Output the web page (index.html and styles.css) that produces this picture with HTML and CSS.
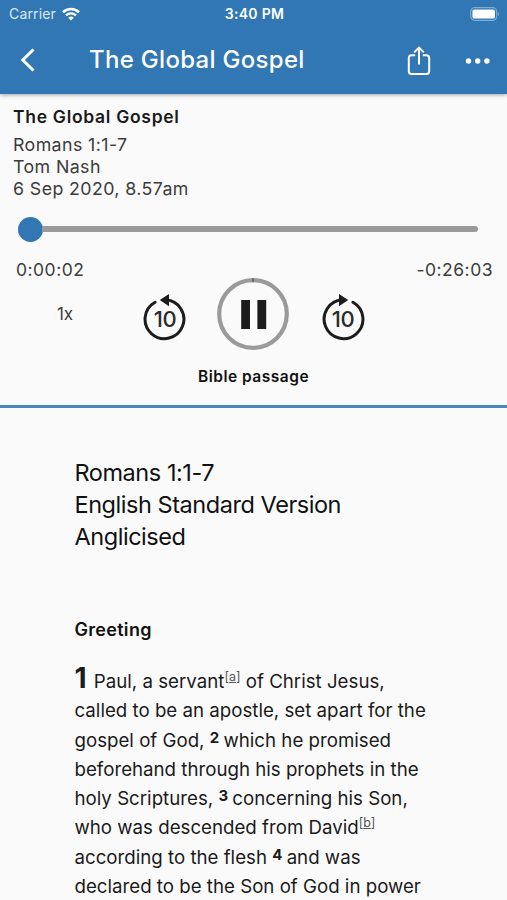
FILE: index.html
```html
<!DOCTYPE html>
<html lang="en">
<head>
  <meta charset="UTF-8">
  <meta name="viewport" content="width=device-width, initial-scale=1.0">
  <title>The Global Gospel</title>
  <link rel="stylesheet" href="styles.css">
</head>
<body>
  <div class="app">
    <header class="top">
      <div class="status-bar">
        <div class="status-left">
          <span class="carrier">Carrier</span>
          <svg class="wifi" viewBox="0 0 18 14" width="18" height="14">
            <path d="M1 5.2a11.6 11.6 0 0 1 16 0" fill="none" stroke="#fff" stroke-width="2.6"/>
            <path d="M4 8.4a7.3 7.3 0 0 1 10 0" fill="none" stroke="#fff" stroke-width="2.3"/>
            <path d="M9 13.6L6.2 10.8a4 4 0 0 1 5.6 0z" fill="#fff"/>
          </svg>
        </div>
        <span class="clock">3:40 PM</span>
        <div class="status-right">
          <svg viewBox="0 0 30 14" width="30" height="14">
            <rect x="0.7" y="0.7" width="26" height="12.6" rx="4" fill="none" stroke="#fff" stroke-opacity="0.4" stroke-width="1.2"/>
            <rect x="2.4" y="2.4" width="22.6" height="9.2" rx="2.2" fill="#fff"/>
            <path d="M28.2 4.8q1.8 2.2 0 4.4z" fill="#fff" fill-opacity="0.5"/>
          </svg>
        </div>
      </div>
      <div class="app-bar">
        <button class="icon-btn back-btn" aria-label="Back">
          <svg viewBox="0 0 16 24" width="16" height="24">
            <path d="M13.5 1.5L2.8 12l10.7 10.5" fill="none" stroke="#fff" stroke-width="3"/>
          </svg>
        </button>
        <h1 class="app-title">The Global Gospel</h1>
        <button class="icon-btn share-btn" aria-label="Share">
          <svg viewBox="0 0 24 30" width="24" height="30">
            <path d="M8.2 9.2H4.6A2.8 2.8 0 0 0 1.8 12v13.2A2.8 2.8 0 0 0 4.6 28h14.8a2.8 2.8 0 0 0 2.8-2.8V12a2.8 2.8 0 0 0-2.8-2.8h-3.6" fill="none" stroke="#fff" stroke-width="2"/>
            <path d="M12 18.5V2M7.2 6.4L12 1.6l4.8 4.8" fill="none" stroke="#fff" stroke-width="2"/>
          </svg>
        </button>
        <button class="icon-btn more-btn" aria-label="More">
          <svg viewBox="0 0 26 6" width="26" height="6">
            <circle cx="3.5" cy="3" r="2.7" fill="#fff"/>
            <circle cx="12.7" cy="3" r="2.7" fill="#fff"/>
            <circle cx="21.9" cy="3" r="2.7" fill="#fff"/>
          </svg>
        </button>
      </div>
    </header>

    <section class="player">
      <h2 class="talk-title">The Global Gospel</h2>
      <p class="talk-passage">Romans 1:1-7</p>
      <p class="talk-speaker">Tom Nash</p>
      <p class="talk-date">6 Sep 2020, 8.57am</p>

      <div class="slider">
        <div class="thumb"></div>
        <div class="track"></div>
      </div>

      <div class="times">
        <span class="elapsed">0:00:02</span>
        <span class="remaining">-0:26:03</span>
      </div>

      <div class="controls">
        <button class="icon-btn speed-btn">1x</button>
        <button class="icon-btn skip-btn" aria-label="Back 10 seconds">
          <svg viewBox="0 0 44 48" width="44" height="48">
            <path d="M12.1 9.2A19.4 19.4 0 1 0 22 6.8" fill="none" stroke="#1c1c1c" stroke-width="3" stroke-linecap="round"/>
            <path d="M16.8 7L26 1v12.3z" fill="#1c1c1c"/>
            <text x="22" y="34" class="skip-num">10</text>
          </svg>
        </button>
        <button class="icon-btn pause-btn" aria-label="Pause">
          <svg viewBox="0 0 72 72" width="72" height="72">
            <circle cx="36" cy="36" r="33.8" fill="none" stroke="#9a9a9a" stroke-width="4.2"/>
            <path d="M36 0v4.3" stroke="#555" stroke-width="1.2"/>
            <path d="M24.2 22h8.8v29h-8.8zM40.4 22h8.8v29h-8.8z" fill="#1c1c1c"/>
          </svg>
        </button>
        <button class="icon-btn skip-btn" aria-label="Forward 10 seconds">
          <svg viewBox="0 0 44 48" width="44" height="48">
            <path d="M31.9 9.2A19.4 19.4 0 1 1 22 6.8" fill="none" stroke="#1c1c1c" stroke-width="3" stroke-linecap="round"/>
            <path d="M27.2 7L18 1v12.3z" fill="#1c1c1c"/>
            <text x="22" y="34" class="skip-num">10</text>
          </svg>
        </button>
      </div>

      <h3 class="tab-title">Bible passage</h3>
    </section>

    <main class="passage">
      <h2 class="passage-title">Romans 1:1-7<br>English Standard Version Anglicised</h2>
      <h3 class="passage-heading">Greeting</h3>
      <p class="verses"><b class="chapter">1</b> Paul, a servant<sup class="note">[<a>a</a>]</sup> of Christ Jesus, called to be an apostle, set apart for the gospel of God, <sup class="num">2</sup> which he promised beforehand through his prophets in the holy Scriptures, <sup class="num">3</sup> concerning his Son, who was descended from David<sup class="note">[<a>b</a>]</sup> according to the flesh <sup class="num">4</sup> and was declared to be the Son of God in power</p>
    </main>
  </div>
</body>
</html>
```

FILE: styles.css
```css
* { margin: 0; padding: 0; box-sizing: border-box; }

body {
  font-family: Inter, "Liberation Sans", sans-serif;
  background: #fafafa;
  color: #111;
}

.app {
  height: 900px;
  display: flex;
  flex-direction: column;
  overflow: hidden;
}

.icon-btn {
  background: none;
  border: none;
  font-family: inherit;
  display: flex;
  align-items: center;
  justify-content: center;
}

/* header */
.top {
  height: 94px;
  flex-shrink: 0;
  background: #3077b3;
  color: #fff;
  box-shadow: 0 1px 4px rgba(0,0,0,0.35);
}

.status-bar {
  height: 27px;
  display: grid;
  grid-template-columns: 1fr auto 1fr;
  align-items: center;
  padding: 0 7px 0 9px;
}

.status-left {
  display: flex;
  align-items: center;
  gap: 6px;
}

.carrier {
  font-size: 14px;
  letter-spacing: 0.15px;
  color: #dce9f4;
}

.clock {
  font-size: 14px;
  font-weight: 600;
  letter-spacing: 0.3px;
}

.status-right {
  display: flex;
  justify-content: flex-end;
}

.app-bar {
  height: 65px;
  display: flex;
  align-items: center;
  padding: 0 16px 0 20px;
}

.app-title {
  flex: 1;
  margin-left: 53px;
  font-size: 24px;
  font-weight: 500;
  letter-spacing: 0.3px;
}

.share-btn {
  margin: 2px 34px 0 0;
}

.more-btn {
  margin-top: 2px;
}

/* player */
.player {
  height: 314px;
  flex-shrink: 0;
  padding: 12px 14px 0 13px;
  border-bottom: 3px solid #4a86b9;
}

.talk-title {
  font-size: 17.5px;
  line-height: 22px;
  font-weight: 600;
  letter-spacing: 0.7px;
  margin-bottom: 6px;
  color: #1a1a1a;
}

.talk-passage,
.talk-speaker,
.talk-date {
  font-size: 17.8px;
  line-height: 22px;
  letter-spacing: 0.4px;
  color: #3c3c3c;
}

.slider {
  display: flex;
  align-items: center;
  height: 26px;
  margin: 16px 15px 0 5px;
}

.thumb {
  width: 25px;
  height: 25px;
  border-radius: 50%;
  background: #3077b3;
}

.track {
  flex: 1;
  height: 6px;
  margin-left: -1px;
  border-radius: 0 3px 3px 0;
  background: #9a9a9a;
}

.times {
  display: flex;
  justify-content: space-between;
  padding: 0 0 0 3px;
  margin-top: 17px;
  font-size: 17.5px;
  line-height: 22px;
  letter-spacing: 0.5px;
  color: #3c3c3c;
}

.controls {
  display: flex;
  height: 72px;
  margin-top: -3px;
}

.speed-btn {
  width: 40px;
  margin-left: 32px;
  font-size: 17px;
  color: #3c3c3c;
}

.skip-btn {
  margin-top: 5px;
}

.controls .skip-btn:nth-child(2) {
  margin-left: 57.5px;
}

.pause-btn {
  margin: 0 32px 0 30.5px;
}

.skip-num {
  font-size: 22px;
  font-weight: 500;
  text-anchor: middle;
  letter-spacing: -0.5px;
  fill: #2a2a2a;
}

.tab-title {
  margin: 16px 0 0 1px;
  font-size: 15.5px;
  line-height: 22px;
  font-weight: 600;
  text-align: center;
  letter-spacing: 0.5px;
}

/* passage text */
.passage {
  padding: 49px 74px 0 74.5px;
}

.passage-title {
  font-size: 23.5px;
  line-height: 32px;
  font-weight: 400;
  letter-spacing: -0.45px;
}

.passage-heading {
  margin-top: 65px;
  font-size: 18px;
  line-height: 24px;
  font-weight: 600;
  letter-spacing: 0.3px;
}

.verses {
  margin-top: 25px;
  margin-right: -4px;
  font-size: 18.7px;
  line-height: 29.3px;
  color: #1a1a1a;
}

.chapter {
  margin-right: 2px;
  font-size: 28px;
  line-height: 0;
  font-weight: 700;
}

.num,
.note {
  line-height: 0;
}

.num {
  margin-right: -1px;
  font-size: 15px;
  font-weight: 700;
  vertical-align: 4px;
}

.note {
  font-size: 12.5px;
  vertical-align: 7px;
  color: #555;
}

.note a {
  text-decoration: underline;
}
```
